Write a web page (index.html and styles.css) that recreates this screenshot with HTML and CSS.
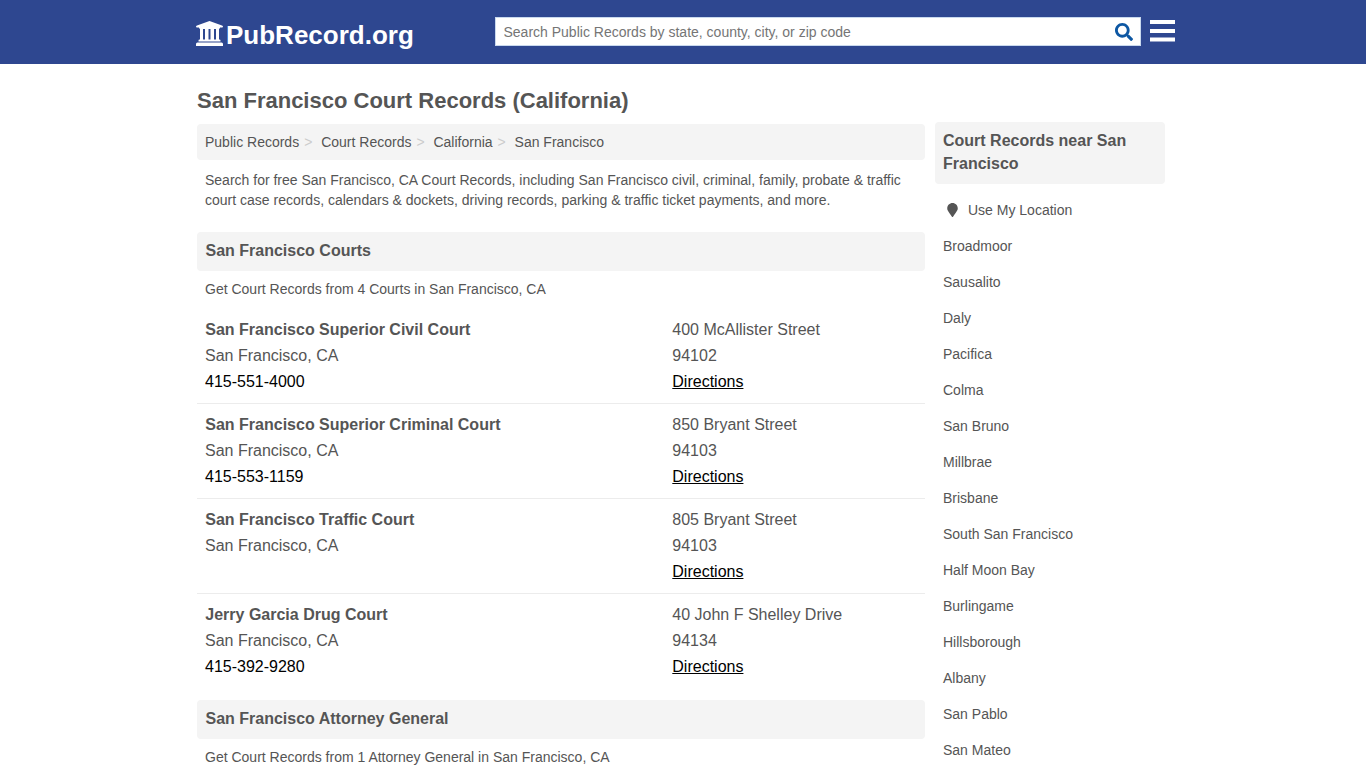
FILE: index.html
```html
<!DOCTYPE html>
<html lang="en">
<head>
<meta charset="utf-8">
<title>San Francisco Court Records (California)</title>
<link rel="stylesheet" href="styles.css">
</head>
<body>
<header class="header">
  <div class="bar">
    <a class="logo">
      <svg class="logo-icon" viewBox="0 0 27 25"><path d="M13.500 0L26 4.500q1 .4 1 1.200T26 6.500h-2V7.500H23V18.500H23.500q1 0 1 1V20.500H2.500V19.500q0-1 1-1H4V7.500H3V6.500H1Q0 6.500 0 5.700T1 4.500zM7 8v10.500h2V8zM12.500 8v10.500h2V8zM18 8v10.500h2V8zM1.500 21.500h24q1.500 0 1.500 1.500v2H0V23q0-1.500 1.500-1.500z"/></svg>
      <span>PubRecord.org</span>
    </a>
    <form class="search">
      <input class="search-input" type="text" placeholder="Search Public Records by state, county, city, or zip code">
      <svg class="search-icon" viewBox="0 0 512 512"><path d="M505 442.700L405.300 343c-4.500-4.500-10.600-7-17-7H372c27.600-35.300 44-79.700 44-128C416 93.100 322.900 0 208 0S0 93.100 0 208s93.100 208 208 208c48.300 0 92.700-16.400 128-44v16.300c0 6.400 2.500 12.500 7 17l99.700 99.700c9.400 9.400 24.600 9.400 33.900 0l28.300-28.300c9.400-9.400 9.400-24.600.1-34zM208 336c-70.700 0-128-57.200-128-128 0-70.700 57.200-128 128-128 70.700 0 128 57.200 128 128 0 70.700-57.200 128-128 128z"/></svg>
    </form>
    <svg class="menu-icon" viewBox="0 0 25 22"><path d="M0 0h25v4H0zM0 9h25v4H0zM0 17.500h25v4H0z"/></svg>
  </div>
</header>
<div class="page">
  <main class="main">
    <h1 class="title">San Francisco Court Records (California)</h1>
    <nav class="crumbs"><a>Public Records</a><i>&gt;</i><a>Court Records</a><i>&gt;</i><a>California</a><i>&gt;</i><a>San Francisco</a></nav>
    <p class="intro">Search for free San Francisco, CA Court Records, including San Francisco civil, criminal, family, probate &amp; traffic<br>court case records, calendars &amp; dockets, driving records, parking &amp; traffic ticket payments, and more.</p>
    <h2 class="section">San Francisco Courts</h2>
    <p class="note">Get Court Records from 4 Courts in San Francisco, CA</p>
    <div class="courts">
      <article class="court"><div><h3>San Francisco Superior Civil Court</h3><p>San Francisco, CA</p><a class="phone">415-551-4000</a></div><div><p>400 McAllister Street</p><p>94102</p><a class="directions">Directions</a></div></article>
      <article class="court"><div><h3>San Francisco Superior Criminal Court</h3><p>San Francisco, CA</p><a class="phone">415-553-1159</a></div><div><p>850 Bryant Street</p><p>94103</p><a class="directions">Directions</a></div></article>
      <article class="court"><div><h3>San Francisco Traffic Court</h3><p>San Francisco, CA</p></div><div><p>805 Bryant Street</p><p>94103</p><a class="directions">Directions</a></div></article>
      <article class="court"><div><h3>Jerry Garcia Drug Court</h3><p>San Francisco, CA</p><a class="phone">415-392-9280</a></div><div><p>40 John F Shelley Drive</p><p>94134</p><a class="directions">Directions</a></div></article>
    </div>
    <h2 class="section">San Francisco Attorney General</h2>
    <p class="note">Get Court Records from 1 Attorney General in San Francisco, CA</p>
  </main>
  <aside class="side">
    <h2 class="side-title">Court Records near San Francisco</h2>
    <ul class="places">
      <li><svg class="pin" viewBox="0 0 384 512"><path d="M172.268 501.670C26.970 291.031 0 269.413 0 192 0 85.961 85.961 0 192 0s192 85.961 192 192c0 77.413-26.970 99.031-172.268 309.670-9.535 13.774-29.930 13.773-39.464 0z"/></svg>Use My Location</li>
      <li>Broadmoor</li><li>Sausalito</li><li>Daly</li><li>Pacifica</li><li>Colma</li><li>San Bruno</li><li>Millbrae</li><li>Brisbane</li><li>South San Francisco</li><li>Half Moon Bay</li><li>Burlingame</li><li>Hillsborough</li><li>Albany</li><li>San Pablo</li><li>San Mateo</li>
    </ul>
  </aside>
</div>
</body>
</html>
```
FILE: styles.css
```css
* { box-sizing: border-box; margin: 0; padding: 0; }
body { height: 768px; overflow: hidden; background: #fff; color: #555; font: 14px/20px "Liberation Sans", Arial, sans-serif; }
.header { height: 64px; background: #2e4790; }
.bar { display: flex; width: 984px; margin: 0 auto; padding-left: 4px; align-items: flex-start; }
.logo { display: flex; flex: none; width: 300px; padding-top: 20px; color: #fff; font-size: 26px; font-weight: bold; line-height: 30px; }
.logo-icon { width: 27px; height: 25px; margin: 1px 3px 0 1px; fill: #fff; }
.search { display: flex; flex: none; align-items: center; width: 646px; height: 29px; margin-top: 17px; padding-right: 7px; background: #fff; border: 1px solid #c9d9ee; }
.search-input { flex: 1; height: 27px; padding-left: 7.500px; border: 0; font: 14px "Liberation Sans", Arial, sans-serif; }
.search-input::placeholder { color: #757575; }
.search-icon { width: 18px; height: 18px; margin-top: 1px; fill: #0d57a3; }
.menu-icon { flex: none; width: 25px; height: 22px; margin: 20px 0 0 9px; fill: #fff; }
.page { display: flex; gap: 10px; width: 972px; margin: 0 auto; }
.main { width: 728px; }
.title { padding-top: 23px; font-size: 22px; line-height: 28px; }
.crumbs { display: flex; height: 36px; margin-top: 9px; padding: 8px; background: #f4f4f4; border-radius: 4px; }
.crumbs i { width: 22px; padding-left: 5px; color: #ccc; font-style: normal; }
.intro { padding: 10px 8px 0; }
.section { height: 39px; margin-top: 22px; padding: 9px 8.500px; background: #f4f4f4; border-radius: 4px; font-size: 16px; line-height: 20px; }
.note { padding: 8px 8px 0; }
.courts { margin-top: 10px; font-size: 16px; line-height: 26px; }
.court { display: grid; grid-template-columns: 467.300px 1fr; height: 95px; padding: 8px; border-bottom: 1px solid #ececec; }
.court:last-child { border: 0; }
.court h3 { padding-left: 0.300px; font-size: 16px; }
.courts + .section { margin-top: 11px; }
.phone, .directions { color: #000; }
.directions { text-decoration: underline; }
.side { width: 230px; padding-top: 58px; }
.side-title { height: 62px; padding: 7px 8px; background: #f4f4f4; border-radius: 4px; font-size: 16px; line-height: 23px; }
.places { padding: 8px; list-style: none; }
.places li { display: flex; align-items: center; height: 36px; }
.pin { width: 11px; height: 14px; margin: 0 10px 0 4px; fill: #555; }
```
